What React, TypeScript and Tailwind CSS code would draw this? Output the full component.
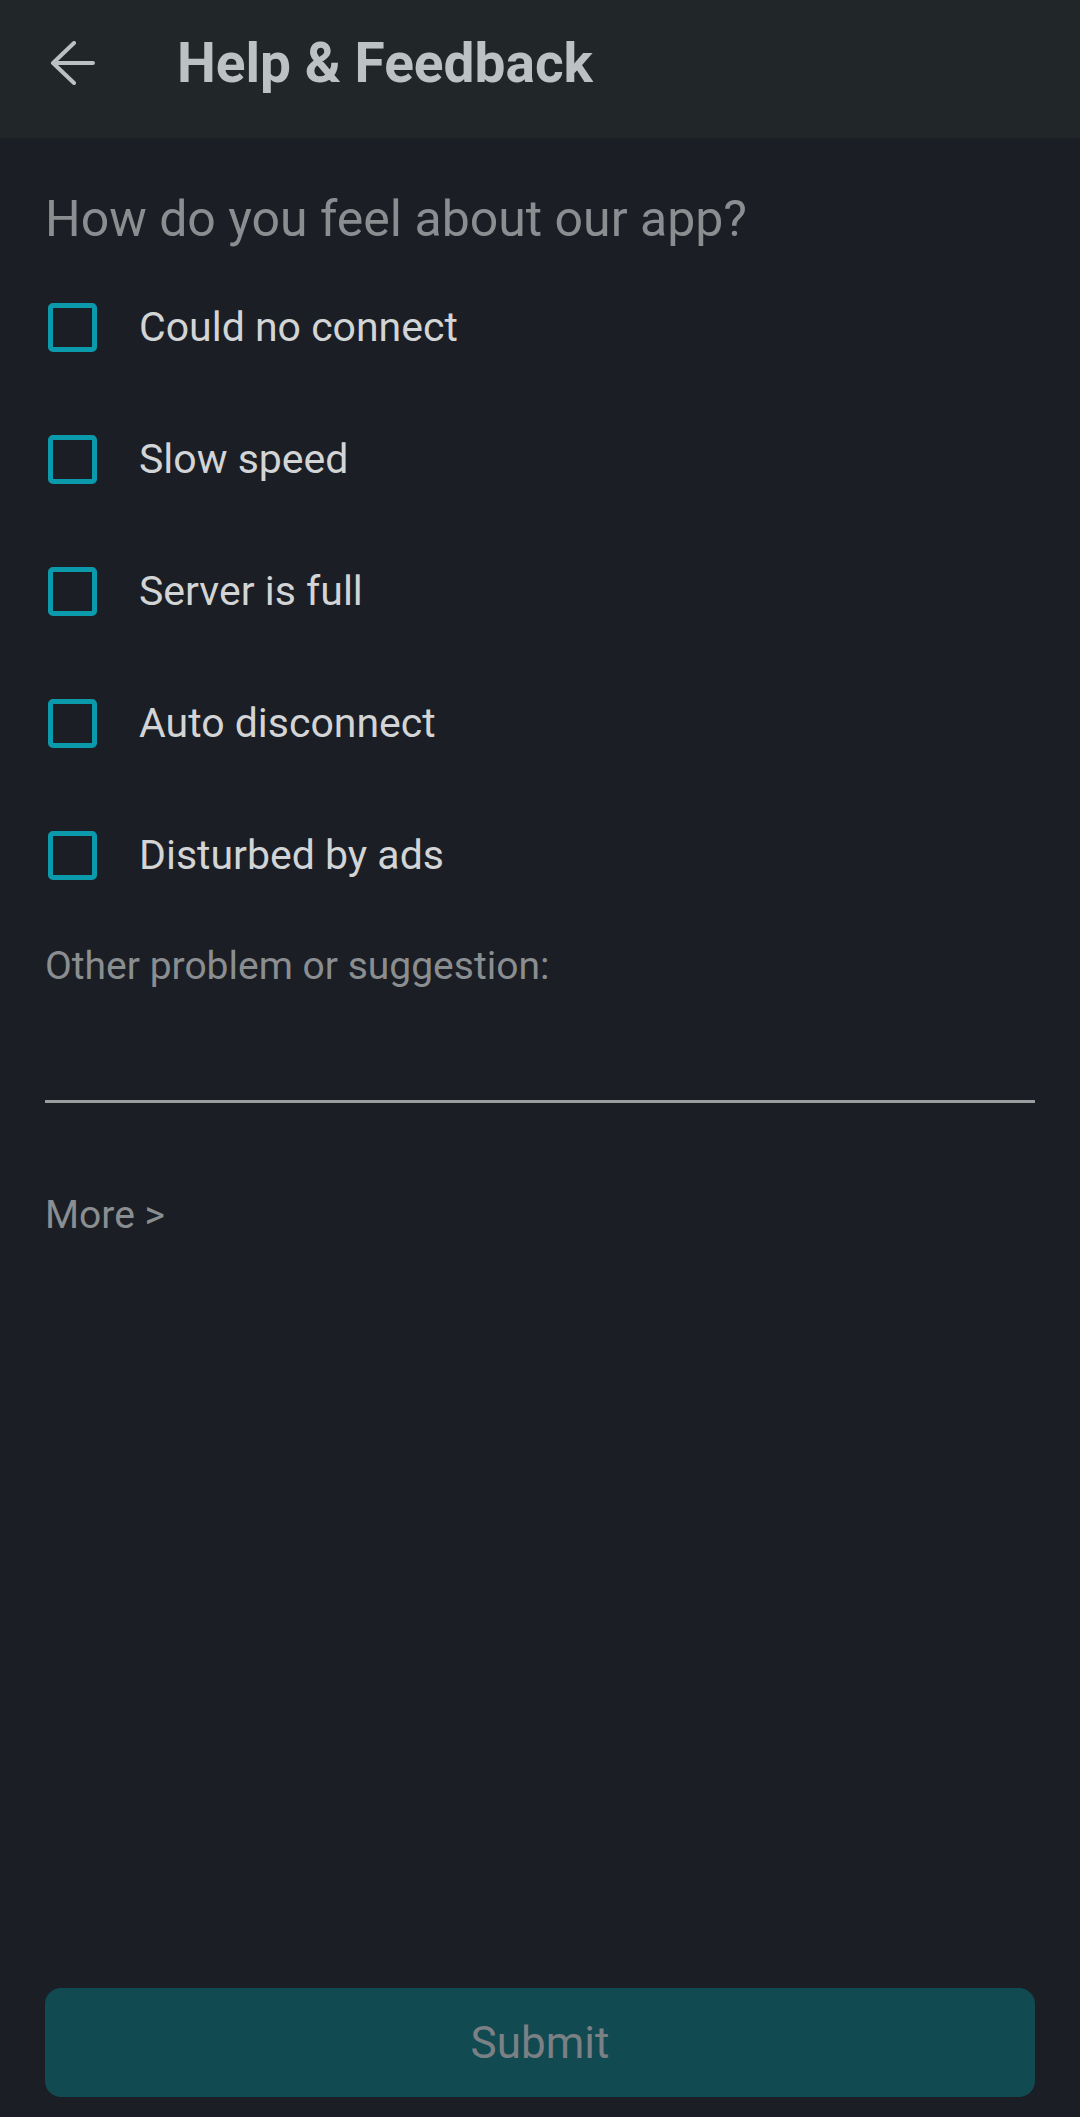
const options = ['Could no connect', 'Slow speed', 'Server is full', 'Auto disconnect', 'Disturbed by ads'];

const BackArrow = () => (
    <svg width="45" height="44" viewBox="0 0 45 44" fill="none" stroke="#bcc0c2" strokeWidth="4" strokeLinecap="round" strokeLinejoin="round">
        <path d="M43 22H3M24 2L3 22L24 42" />
    </svg>
);

export default function App() {
    return (
        <div className="min-h-[2117px] flex flex-col bg-[#1b1f25] font-['Roboto',sans-serif]">
            <header className="h-[138px] shrink-0 flex items-center pb-[12px] bg-[#212629]">
                <div className="ml-[50px] w-[45px] flex">
                    <BackArrow />
                </div>
                <h1 className="ml-[82px] text-[55px] leading-[64px] font-bold text-[#bdc1c3]">Help &amp; Feedback</h1>
            </header>

            <main className="flex-1 flex flex-col px-[45px]">
                <p className="mt-[53px] text-[50px] leading-[56px] text-[#8b8e91]">How do you feel about our app?</p>

                <div className="mt-[14px] flex flex-col">
                    {options.map((label) => (
                        <label key={label} className="h-[132px] flex items-center">
                            <span className="ml-[3px] w-[49px] h-[49px] rounded-[5px] border-[5px] border-[#0b9aab] shrink-0" />
                            <span className="ml-[42px] text-[41px] leading-[52px] text-[#d2d4d6]">{label}</span>
                        </label>
                    ))}
                </div>

                <p className="mt-[22px] text-[39px] leading-[46px] text-[#8b8e91]">Other problem or suggestion:</p>
                <div className="h-[114px] border-b-[3px] border-[#9c9d9e]" />

                <p className="mt-[89px] text-[39px] leading-[46px] text-[#8b8e91]">More &gt;</p>

                <div className="flex-1" />

                <button className="mb-[20px] h-[109px] w-full rounded-[16px] bg-[#124a52] text-[44px] text-[#7b8084]">Submit</button>
            </main>
        </div>
    );
}
